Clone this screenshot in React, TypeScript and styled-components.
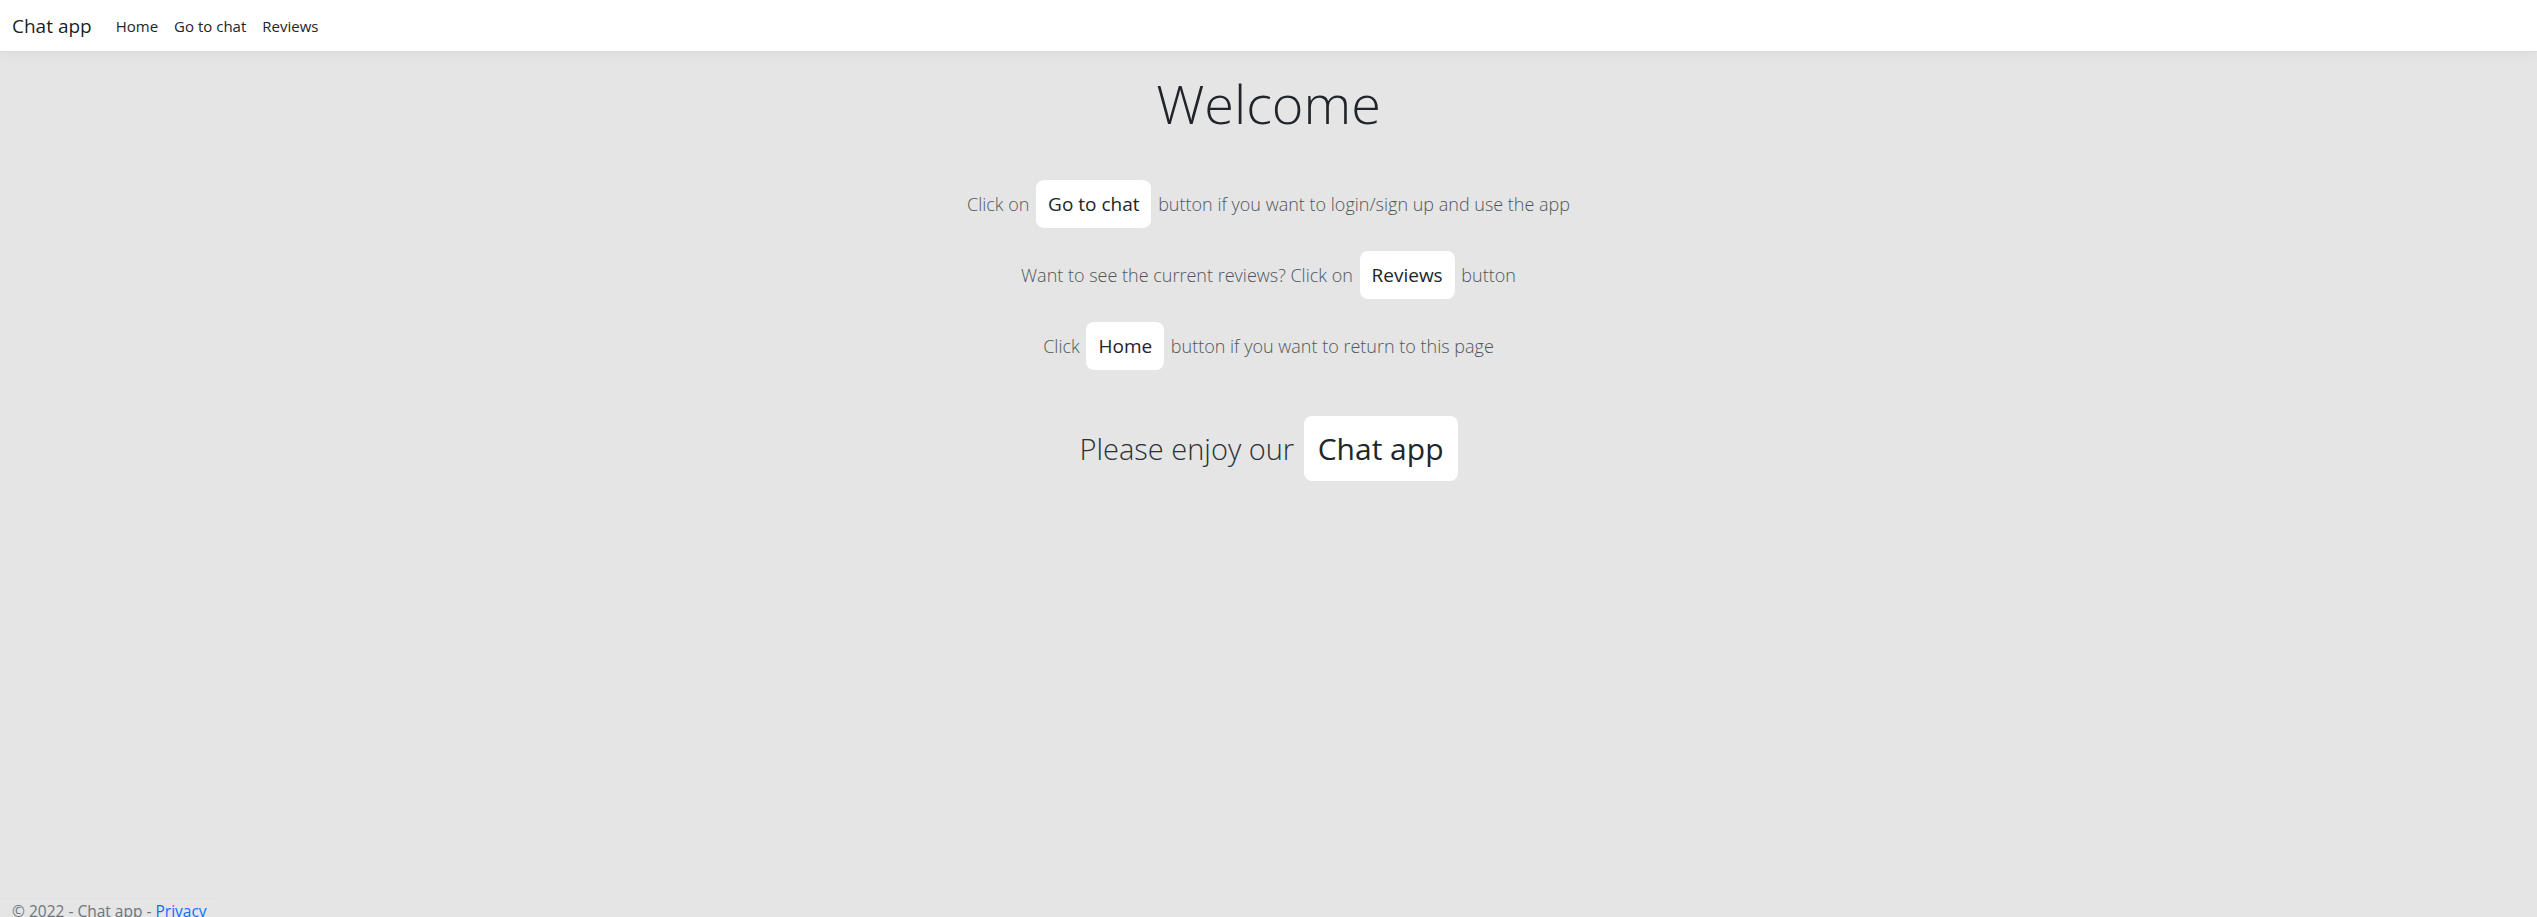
import { FC } from 'react';
import styled, { createGlobalStyle } from 'styled-components';

const GlobalStyle = createGlobalStyle`
  html, body {
    margin: 0;
    padding: 0;
    height: 100%;
    overflow: hidden;
  }

  body {
    background: #e5e5e5;
    color: #212529;
    font-family: 'Open Sans', 'Liberation Sans', sans-serif;
    font-size: 16px;
  }

  * {
    box-sizing: border-box;
  }
`;

const navLinks = ['Home', 'Go to chat', 'Reviews'];

const App: FC = () => {
  return (
    <>
      <GlobalStyle />
      <Page>
        <NavBar>
          <Brand href="#">Chat app</Brand>
          <NavList>
            {navLinks.map((link) => (
              <NavLink key={link} href="#">
                {link}
              </NavLink>
            ))}
          </NavList>
        </NavBar>

        <Main>
          <Title>Welcome</Title>
          <Lead>
            Click on <InlineButton>Go to chat</InlineButton> button if you want to login/sign up and use the app
          </Lead>
          <Lead>
            Want to see the current reviews? Click on <InlineButton>Reviews</InlineButton> button
          </Lead>
          <Lead>
            Click <InlineButton>Home</InlineButton> button if you want to return to this page
          </Lead>
          <Enjoy>
            Please enjoy our <InlineButton $large>Chat app</InlineButton>
          </Enjoy>
        </Main>

        <Footer>
          &copy; 2022 - Chat app - <FooterLink href="#">Privacy</FooterLink>
        </Footer>
      </Page>
    </>
  );
};

const Page = styled.div`
  height: 100vh;
  display: flex;
  flex-direction: column;
`;

const NavBar = styled.nav`
  height: 52px;
  flex-shrink: 0;
  display: flex;
  align-items: center;
  padding: 0 12px;
  background: #ffffff;
  border-bottom: 1px solid #dcdcdc;
  box-shadow: 0 4px 12px rgba(0, 0, 0, 0.03);
`;

const Brand = styled.a`
  font-size: 19px;
  line-height: 30px;
  color: rgba(0, 0, 0, 0.9);
  text-decoration: none;
  margin-right: 16px;
`;

const NavList = styled.div`
  display: flex;
  align-items: center;
`;

const NavLink = styled.a`
  padding: 8px;
  font-size: 15px;
  line-height: 24px;
  color: #212529;
  text-decoration: none;
`;

const Main = styled.main`
  flex: 1;
  display: flex;
  flex-direction: column;
  align-items: center;
  padding-top: 19px;
`;

const Title = styled.h1`
  margin: 0 0 44px;
  font-size: 54px;
  font-weight: 300;
  line-height: 1.2;
  color: #212529;
`;

const Lead = styled.p`
  margin: 0 0 23px;
  height: 48px;
  display: flex;
  align-items: center;
  white-space: pre;
  font-size: 18px;
  font-weight: 300;
  color: #50555b;
`;

const Enjoy = styled.p`
  margin: 23px 0 0;
  height: 65px;
  display: flex;
  align-items: center;
  white-space: pre;
  font-size: 29px;
  font-weight: 300;
  color: #2b3035;
`;

const InlineButton = styled.span<{ $large?: boolean }>`
  display: inline-flex;
  align-items: center;
  height: ${(props) => (props.$large ? '65px' : '48px')};
  padding: ${(props) => (props.$large ? '0 14px' : '0 12px')};
  margin: ${(props) => (props.$large ? '0 0 0 2px' : '0 2px')};
  background: #ffffff;
  border-radius: 8px;
  font-size: ${(props) => (props.$large ? '30px' : '19px')};
  font-weight: 400;
  color: #212529;
`;

const Footer = styled.footer`
  align-self: flex-start;
  height: 19px;
  flex-shrink: 0;
  padding: 0 12px;
  border-top: 1px solid #dee2e6;
  font-size: 15.5px;
  line-height: 24px;
  white-space: nowrap;
  color: #6c757d;
`;

const FooterLink = styled.a`
  color: #0d6efd;
  text-decoration: none;
`;

export default App;
